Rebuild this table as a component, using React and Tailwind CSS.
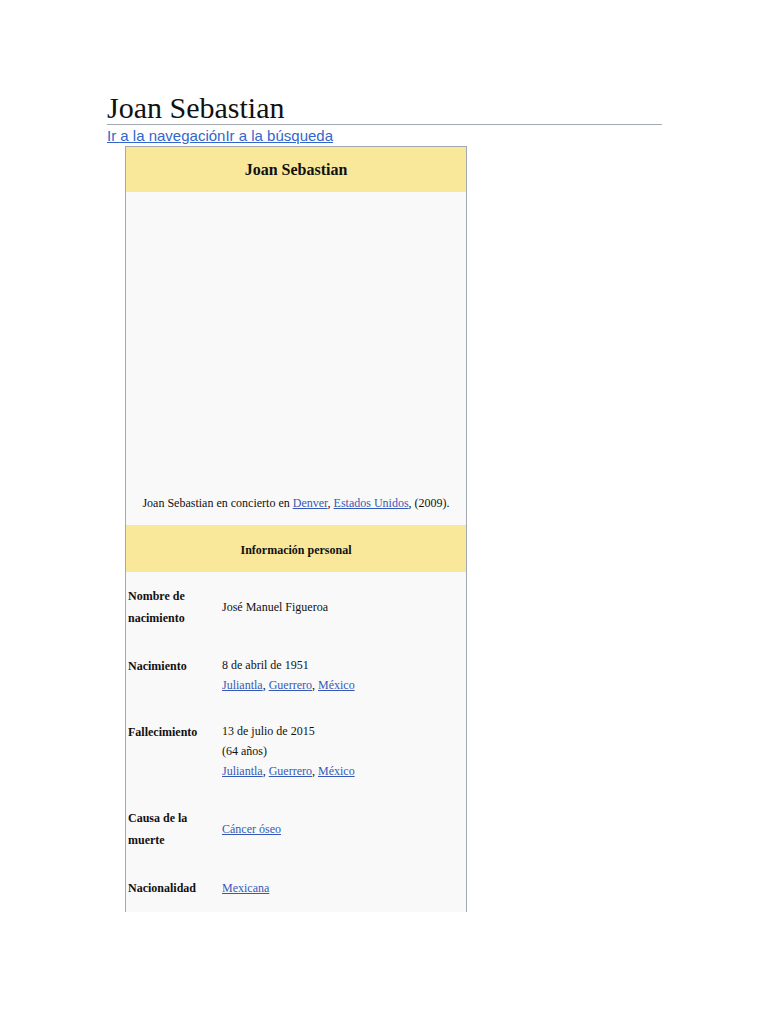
import React from 'react';

const serif = { fontFamily: '"Liberation Serif", "Times New Roman", serif' };

const A = ({ children }) => (
  <a href="#" className="text-[#3659b8] underline">
    {children}
  </a>
);

const rows = [
  {
    label: ['Nombre de', 'nacimiento'],
    value: [<span key="a">José Manuel Figueroa</span>],
  },
  {
    label: ['Nacimiento'],
    value: [
      <span key="a">8 de abril de 1951</span>,
      <span key="b">
        <A>Juliantla</A>, <A>Guerrero</A>, <A>México</A>
      </span>,
    ],
  },
  {
    label: ['Fallecimiento'],
    value: [
      <span key="a">13 de julio de 2015</span>,
      <span key="b">(64 años)</span>,
      <span key="c">
        <A>Juliantla</A>, <A>Guerrero</A>, <A>México</A>
      </span>,
    ],
  },
  {
    label: ['Causa de la', 'muerte'],
    value: [<A key="a">Cáncer óseo</A>],
  },
  {
    label: ['Nacionalidad'],
    value: [<A key="a">Mexicana</A>],
  },
];

export default function App() {
  return (
    <div className="min-h-screen bg-white">
      <div className="ml-[107px] w-[555px] pt-[92px]">
        <h1
          className="text-[30px] leading-[32px] font-normal text-[#111] border-b border-[#a2a9b1]"
          style={serif}
        >
          Joan Sebastian
        </h1>
        <div
          className="mt-[2px] text-[15px] leading-[17px] text-[#3366cc] underline"
          style={{ fontFamily: '"Liberation Sans", Arial, sans-serif' }}
        >
          <a href="#">Ir a la navegación</a>
          <a href="#">Ir a la búsqueda</a>
        </div>

        <div
          className="ml-[18px] mt-[2px] w-[342px] border-x border-t border-[#a2a9b1] bg-[#f9f9f9] text-[12px] text-[#111]"
          style={serif}
        >
          <div className="h-[45px] bg-[#f9e89a] flex items-center justify-center text-[16px] font-bold">
            Joan Sebastian
          </div>
          <div className="h-[301px]" />
          <div className="text-center leading-[20px] pb-[12px]">
            Joan Sebastian en concierto en <A>Denver</A>, <A>Estados Unidos</A>, (2009).
          </div>
          <div className="bg-[#f9e89a] pt-[15px] pb-[12px] leading-[20px] text-center font-bold">
            Información personal
          </div>

          {rows.map((r, i) => (
            <div key={i} className="flex py-[13px]">
              <div className="w-[96px] pl-[2px] font-bold leading-[22px] self-start">
                {r.label.map((l, j) => (
                  <div key={j}>{l}</div>
                ))}
              </div>
              <div className="flex-1 flex flex-col justify-center leading-[20px]">
                {r.value.map((v, j) => (
                  <div key={j}>{v}</div>
                ))}
              </div>
            </div>
          ))}
        </div>
      </div>
    </div>
  );
}
